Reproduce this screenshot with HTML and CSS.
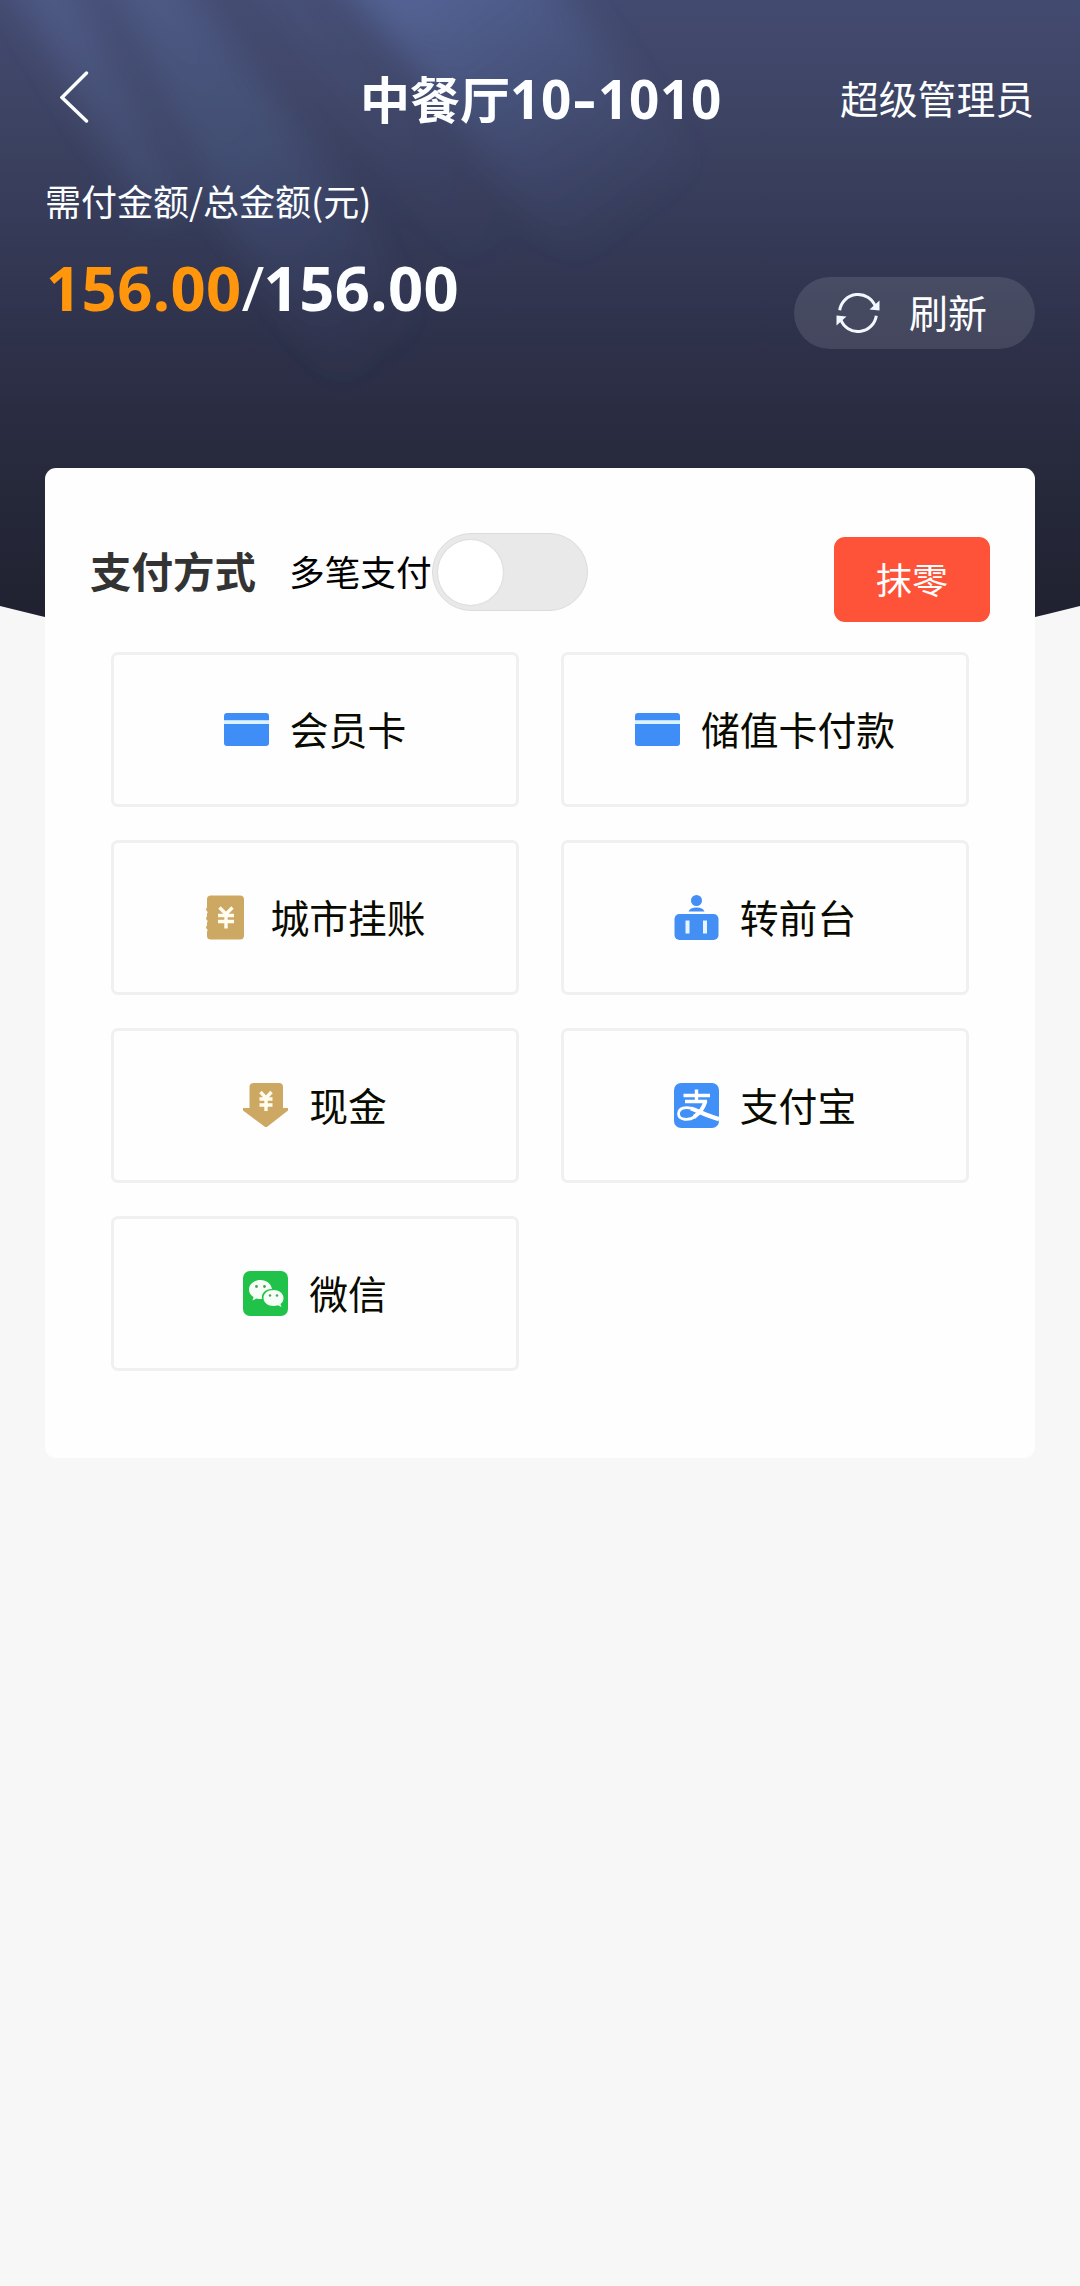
FILE: index.html
```html
<!DOCTYPE html>
<html lang="zh-CN">
<head>
<meta charset="utf-8">
<title>支付</title>
<link rel="stylesheet" href="styles.css">
</head>
<body>
<div class="page">
  <svg class="backdrop" viewBox="0 0 1080 640" preserveAspectRatio="none" aria-hidden="true">
    <defs>
      <linearGradient id="night" x1="0" y1="0" x2="0" y2="640" gradientUnits="userSpaceOnUse">
        <stop offset="0" stop-color="#434a70"/>
        <stop offset=".16" stop-color="#3e4464"/>
        <stop offset=".36" stop-color="#353a57"/>
        <stop offset=".55" stop-color="#2d3048"/>
        <stop offset=".73" stop-color="#272a3c"/>
        <stop offset="1" stop-color="#1e202e"/>
      </linearGradient>
      <linearGradient id="beam" x1="400" y1="0" x2="600" y2="260" gradientUnits="userSpaceOnUse">
        <stop offset="0" stop-color="#647cba" stop-opacity=".5"/>
        <stop offset=".4" stop-color="#5870a8" stop-opacity=".32"/>
        <stop offset="1" stop-color="#5068a0" stop-opacity="0"/>
      </linearGradient>
      <linearGradient id="ray" x1="80" y1="0" x2="380" y2="380" gradientUnits="userSpaceOnUse">
        <stop offset="0" stop-color="#6478b0" stop-opacity=".42"/>
        <stop offset=".5" stop-color="#5470a4" stop-opacity=".3"/>
        <stop offset="1" stop-color="#5060a0" stop-opacity="0"/>
      </linearGradient>
      <filter id="soft" x="-30%" y="-30%" width="160%" height="160%"><feGaussianBlur stdDeviation="18"/></filter>
      <clipPath id="arc"><path d="M0 0H1080V606Q540 744 0 606Z"/></clipPath>
    </defs>
    <g clip-path="url(#arc)">
      <rect width="1080" height="640" fill="url(#night)"/>
      <g filter="url(#soft)">
        <path fill="url(#beam)" d="M315 -50H530L740 220L760 400L560 250L440 100Z"/>
        <path fill="url(#ray)" d="M95 -50H160L310 140L500 440L340 400L200 180Z" opacity=".85"/>
        <path fill="url(#ray)" d="M-10 -50H60L190 200L150 220Z" opacity=".8"/>
        <path fill="url(#ray)" d="M220 -50H280L600 330L480 300Z" opacity=".35"/>
      </g>
    </g>
  </svg>

  <header class="navbar">
    <svg class="back" viewBox="0 0 44 52"><path d="M26.500 2L2 26.500L26.500 50"/></svg>
    <h1 class="title">中餐厅<span class="title-no">10<span class="dash">-</span>1010</span></h1>
    <span class="user">超级管理员</span>
  </header>

  <section class="summary">
    <div>
      <div class="label">需付金额/总金额(元)</div>
      <div class="amounts"><b class="due">156.00</b><span class="slash">/</span><b>156.00</b></div>
    </div>
    <button class="refresh">
      <svg viewBox="0 0 44 40" class="refresh-icon">
        <path d="M3.700 17.300A18.500 18.500 0 0 1 39.400 13.700M40.300 22.700A18.500 18.500 0 0 1 4.600 26.300"/>
        <path class="tip" d="M43.500 7.500V17.500L33.500 16.500ZM.5 32.500V22.500L10.500 23.500Z"/>
      </svg>
      <span class="txt">刷新</span>
    </button>
  </section>

  <main class="card">
    <div class="card-head">
      <h2 class="heading">支付方式</h2>
      <span class="multi">多笔支付</span>
      <span class="switch"><i class="knob"></i></span>
      <button class="round">抹零</button>
    </div>
    <div class="methods">
      <button class="method"><svg class="icon" viewBox="0 0 45 45"><path fill="#3f8ef7" d="M0 13.500V9Q0 6 3 6H42Q45 6 45 9V13.500ZM0 17H45V36Q45 39 42 39H3Q0 39 0 36Z"/><path fill="#d9f4ff" d="M0 13.500H45V17H0Z"/></svg><span class="txt">会员卡</span></button>
      <button class="method"><svg class="icon" viewBox="0 0 45 45"><path fill="#3f8ef7" d="M0 13.500V9Q0 6 3 6H42Q45 6 45 9V13.500ZM0 17H45V36Q45 39 42 39H3Q0 39 0 36Z"/><path fill="#d9f4ff" d="M0 13.500H45V17H0Z"/></svg><span class="txt">储值卡付款</span></button>
      <button class="method"><svg class="icon" viewBox="0 0 45 45"><path fill="#cda862" d="M7 .5H36Q40 .5 40 4.500V40.500Q40 44.500 36 44.500H7Q3 44.500 3 41V36.500Q4.500 35.500 3 34Q1 32.500 3 30.500V27.500Q4.500 26.500 3 25Q1 23.500 3 21.500V18.500Q4.500 17.500 3 16Q1 14.500 3 12.500V4Q3 .5 7 .5Z"/><path class="yen" d="M15.500 12.500L22 19L28.500 12.500M14 20.500H30M14 26.500H30M22 19V33.500"/></svg><span class="txt">城市挂账</span></button>
      <button class="method"><svg class="icon" viewBox="0 0 45 45"><g fill="#438ff3"><circle cx="22.500" cy="5.500" r="5.500"/><path d="M14.500 16.500Q16 12.500 22.500 12.500T30.500 16.500Z"/><rect x=".5" y="19" width="44" height="26" rx="5"/></g><path d="M13.500 25.500V38.500M31 25.500V38.500" stroke="#e6f5ff" stroke-width="4"/></svg><span class="txt">转前台</span></button>
      <button class="method"><svg class="icon" viewBox="0 0 45 45"><path fill="#cda862" d="M11 0H36Q40 0 40 4V25H45V27.500L24.500 43.500Q23 44.500 21.500 43.500L0 27.500V25H6.500V4Q6.500 0 11 0Z"/><path class="yen" d="M17.500 9L23 15L28.500 9M16.500 16H29.500M16.500 22H29.500M23 15V28"/></svg><span class="txt">现金</span></button>
      <button class="method"><svg class="icon" viewBox="0 0 45 45"><rect width="45" height="45" rx="7" fill="#4190f7"/><g fill="none" stroke="#fff"><path stroke-width="3.400" d="M9.500 12.500H36M22.500 6.500V18M11 18.500H33"/><path stroke-width="4" d="M31.500 18C29.500 25 26 30 20 34"/><path stroke-width="2.800" d="M20.500 34C15 37.500 5 37.500 4.500 31C4.500 24.500 12 23.500 18 25.500"/><path stroke-width="4.400" d="M17 25.500C25 28 33 33 45 36"/></g></svg><span class="txt">支付宝</span></button>
      <button class="method"><svg class="icon" viewBox="0 0 45 45"><rect width="45" height="45" rx="7" fill="#20c24a"/><path fill="#f5fff5" d="M17.500 9C10.500 9 6 13.500 6 18.500C6 21.500 7.500 24 10.500 26L9.500 29.500L13.500 27.500Q16 28.200 19 28C18 22 23 17.500 29 18C28 12.500 23.500 9 17.500 9Z"/><path fill="#f5fff5" d="M30.500 19C24.500 19 20.500 22.500 20.500 27C20.500 31.500 25 35 30.500 35Q33 35 35 34.200L38.500 36L37.500 33C39.500 31.500 40.500 29.500 40.500 27C40.500 22.500 36 19 30.500 19Z"/><g fill="#4d9c61"><circle cx="13.500" cy="15.500" r="1.400"/><circle cx="21.500" cy="15.500" r="1.400"/><circle cx="27" cy="24.500" r="1.200"/><circle cx="34" cy="24.500" r="1.200"/></g></svg><span class="txt">微信</span></button>
    </div>
  </main>
</div>
</body>
</html>
```
FILE: styles.css
```css
* { box-sizing: border-box; }
body {
  margin: 0;
  background: #f7f7f7;
  font-family: "Noto Sans CJK SC", sans-serif;
}
h1, h2 { margin: 0; }
button { border: 0; padding: 0; font: inherit; }
.page {
  position: relative;
  min-height: 2286px;
  padding: 0 45px;
}
.backdrop {
  position: absolute;
  left: 0;
  top: 0;
  width: 100%;
  height: 640px;
  z-index: -1;
}
.navbar {
  display: grid;
  grid-template-columns: 1fr auto 1fr;
  align-items: center;
  height: 157px;
  padding: 36px 1px 0 15px;
  margin-bottom: 16px;
  color: #fcfeff;
}
.back {
  width: 44px;
  height: 52px;
  fill: none;
  stroke: #fcfeff;
  stroke-width: 3.4;
  stroke-linecap: round;
}
.title {
  margin: 2px 0 0 -12px;
  font-size: 50px;
  line-height: 60px;
  font-weight: 700;
  white-space: nowrap;
}
.title-no {
  font-family: "Noto Sans", sans-serif;
  font-size: 53px;
  letter-spacing: .7px;
}
.dash {
  display: inline-block;
  width: 26px;
  text-align: center;
  transform: scaleX(1.35);
}
.user {
  justify-self: end;
  font-size: 38.800px;
  line-height: 50px;
}
.summary {
  display: flex;
  justify-content: space-between;
  height: 295px;
  color: #fcfeff;
}
.label {
  font-size: 36px;
  line-height: 54px;
}
.amounts {
  display: flex;
  font-family: "Noto Sans", sans-serif;
  font-size: 61.500px;
  line-height: 80px;
  margin: 20px 0 0 1px;
  letter-spacing: .4px;
}
.due { color: #ff960c; }
.slash { width: 22px; }
.refresh {
  display: flex;
  align-items: center;
  gap: 29px;
  width: 241px;
  height: 72px;
  margin-top: 104px;
  padding-left: 42px;
  border-radius: 36px;
  background: rgba(255, 255, 255, .11);
  color: #fcfeff;
  font-size: 39px;
}
.refresh-icon {
  width: 44px;
  height: 40px;
  fill: none;
  stroke: #f3f7ff;
  stroke-width: 3;
}
.refresh-icon .tip { fill: #f3f7ff; stroke: none; }
.txt { margin-bottom: 4px; }
.card {
  height: 990px;
  padding: 65px 45px 0;
  border-radius: 11px;
  background: #fefefe;
}
.card-head {
  display: flex;
  align-items: center;
  height: 78px;
}
.heading {
  width: 199px;
  margin-bottom: 4px;
  color: #333;
  font-size: 41.500px;
  line-height: 60px;
}
.multi {
  width: 143px;
  margin-bottom: 2px;
  font-size: 35.700px;
  line-height: 54px;
  white-space: nowrap;
}
.switch {
  width: 156px;
  height: 78px;
  padding: 6px 5px;
  border: 1px solid #dcdcdd;
  border-radius: 39px;
  background: #e9e9ea;
}
.knob {
  display: block;
  width: 65px;
  height: 65px;
  border-radius: 50%;
  background: #fff;
  box-shadow: 0 0 2px rgba(0, 0, 0, .15);
}
.round {
  width: 156px;
  height: 85px;
  margin: 15px 0 0 auto;
  padding-bottom: 3px;
  border-radius: 11px;
  background: #ff5339;
  color: #fff;
  font-size: 36px;
}
.methods {
  display: grid;
  grid-template-columns: 408px 408px;
  grid-auto-rows: 155px;
  gap: 33px 42px;
  margin: 41px 0 0 21px;
}
.method {
  display: flex;
  align-items: center;
  justify-content: center;
  gap: 21px;
  border: 3px solid #f0f0f0;
  border-radius: 7px;
  background: #fefefe;
  color: #090a00;
  font-size: 38.800px;
}
.icon { width: 45px; height: 45px; flex: none; }
.yen { fill: none; stroke: #fffcf0; stroke-width: 3.4; }
```
